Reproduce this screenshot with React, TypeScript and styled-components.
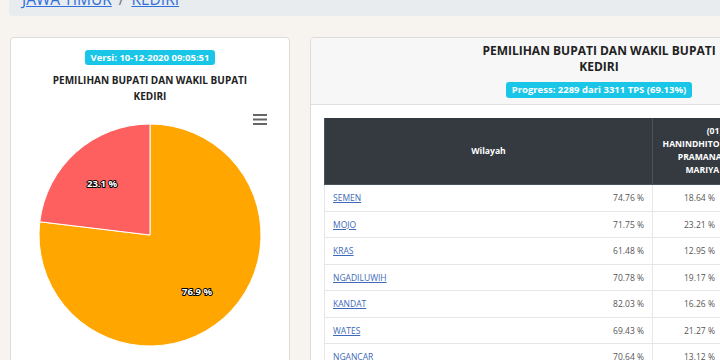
import styled, { createGlobalStyle } from 'styled-components';

const GlobalStyle = createGlobalStyle`
  body {
    margin: 0;
    background: #f7f3ef;
    font-family: 'Open Sans', 'Liberation Sans', sans-serif;
    color: #212529;
    overflow: hidden;
  }
`;

const Page = styled.div`
  width: 1200px;
  padding-left: 9px;
`;

const Breadcrumb = styled.nav`
  margin-top: -21px;
  padding: 8px 13px 5px;
  background: #e9ecef;
  border-radius: 4px;
  font-size: 15.5px;
  line-height: 24px;
  color: #6c757d;
  display: flex;
  gap: 7px;
`;

const Crumb = styled.a`
  color: #2f6fdb;
  text-decoration: underline;
`;

const Row = styled.div`
  display: flex;
  gap: 20px;
  margin-top: 21px;
  padding-left: 1px;
  align-items: flex-start;
`;

const Card = styled.div<{ $width: number }>`
  box-sizing: border-box;
  width: ${(p) => p.$width}px;
  flex-shrink: 0;
  background: #fff;
  border: 1px solid #dedcda;
  border-radius: 4px;
  height: 420px;
  overflow: hidden;
`;

const ChartHead = styled.div`
  padding-top: 12px;
  display: flex;
  flex-direction: column;
  align-items: center;
  text-align: center;
`;

const Badge = styled.span<{ $size: number; $height: number }>`
  display: inline-block;
  background: #1ac6e8;
  color: #fff;
  font-weight: 700;
  font-size: ${(p) => p.$size}px;
  line-height: ${(p) => p.$height}px;
  padding: 0 6px;
  border-radius: 3px;
`;

const ChartTitle = styled.div`
  margin-top: 7px;
  font-weight: 700;
  font-size: 10px;
  line-height: 16px;
  color: #222;
`;

const Chart = styled.svg`
  display: block;
`;

const CardHeader = styled.div`
  background: #f7f7f7;
  border-bottom: 1px solid #dfdfdf;
  padding: 5px 12px 6px;
  display: flex;
  flex-direction: column;
  align-items: center;
  text-align: center;
`;

const Title = styled.div`
  font-weight: 700;
  font-size: 12px;
  line-height: 16px;
  color: #222;
  margin-bottom: 7px;
`;

const CardBody = styled.div`
  padding: 13px;
`;

const Table = styled.table`
  border-collapse: collapse;
  table-layout: fixed;
  width: 552px;
`;

const Th = styled.th<{ $width: number }>`
  box-sizing: border-box;
  width: ${(p) => p.$width}px;
  background: #343a40;
  color: #fff;
  font-weight: 700;
  font-size: 8.6px;
  line-height: 13px;
  padding: 7px 8px;
  border: 1px solid #4b535b;
  border-top: none;
  vertical-align: middle;
`;

const Td = styled.td<{ $align?: string; $indent?: number }>`
  padding: 6px 8px 6px ${(p) => p.$indent ?? 8}px;
  font-size: 8.5px;
  line-height: 13.5px;
  border: 1px solid #e6e6e6;
  color: #555;
  text-align: ${(p) => p.$align ?? 'right'};
  white-space: nowrap;
`;

const AreaLink = styled.a`
  color: #3e69b8;
  text-decoration: underline;
`;

const Value = styled.span`
  float: right;
`;

const rows = [
  ['SEMEN', '74.76 %', '18.64 %'],
  ['MOJO', '71.75 %', '23.21 %'],
  ['KRAS', '61.48 %', '12.95 %'],
  ['NGADILUWIH', '70.78 %', '19.17 %'],
  ['KANDAT', '82.03 %', '16.26 %'],
  ['WATES', '69.43 %', '21.27 %'],
  ['NGANCAR', '70.64 %', '13.12 %'],
];

// pie: 23.1% red slice from 12 o'clock going counter-clockwise
const cx = 139;
const cy = 131;
const r = 111;
const theta = 0.231 * 2 * Math.PI;
const px = cx - r * Math.sin(theta);
const py = cy - r * Math.cos(theta);

function PieChart() {
  return (
    <Chart width={278} height={300}>
      <path
        d={`M${cx},${cy} L${px},${py} A${r},${r} 0 1 0 ${cx},${cy - r} Z`}
        fill="#ffa600"
        stroke="#fff"
        strokeWidth={1}
      />
      <path
        d={`M${cx},${cy} L${cx},${cy - r} A${r},${r} 0 0 0 ${px},${py} Z`}
        fill="#fe6060"
        stroke="#fff"
        strokeWidth={1}
      />
      <g stroke="#666" strokeWidth={2}>
        <line x1={242} y1={11} x2={256} y2={11} />
        <line x1={242} y1={15.5} x2={256} y2={15.5} />
        <line x1={242} y1={20} x2={256} y2={20} />
      </g>
      <g
        fontFamily="'Open Sans', sans-serif"
        fontSize={9.5}
        fontWeight={700}
        fill="#fff"
        stroke="#000"
        strokeWidth={2}
        strokeLinejoin="round"
        paintOrder="stroke"
        textAnchor="middle"
      >
        <text x={91} y={83}>23.1 %</text>
        <text x={186} y={191}>76.9 %</text>
      </g>
    </Chart>
  );
}

export default function App() {
  return (
    <Page>
      <GlobalStyle />
      <Breadcrumb>
        <Crumb>JAWA TIMUR</Crumb>
        <span>/</span>
        <Crumb>KEDIRI</Crumb>
      </Breadcrumb>
      <Row>
        <Card $width={280}>
          <ChartHead>
            <Badge $size={9.5} $height={15}>Versi: 10-12-2020 09:05:51</Badge>
            <ChartTitle>
              PEMILIHAN BUPATI DAN WAKIL BUPATI
              <br />
              KEDIRI
            </ChartTitle>
          </ChartHead>
          <PieChart />
        </Card>
        <Card $width={578}>
          <CardHeader>
            <Title>
              PEMILIHAN BUPATI DAN WAKIL BUPATI
              <br />
              KEDIRI
            </Title>
            <Badge $size={9.5} $height={16}>Progress: 2289 dari 3311 TPS (69.13%)</Badge>
          </CardHeader>
          <CardBody>
            <Table>
              <thead>
                <tr>
                  <Th $width={328}>Wilayah</Th>
                  <Th $width={124}>
                    (01)
                    <br />
                    HANINDHITO HIMAWAN PRAMANA - DEWI MARIYA ULFA
                  </Th>
                  <Th $width={100}>KOTAK KOSONG</Th>
                </tr>
              </thead>
              <tbody>
                {rows.map(([name, a, b]) => (
                  <tr key={name}>
                    <Td $align="left">
                      <AreaLink>{name}</AreaLink>
                      <Value>{a}</Value>
                    </Td>
                    <Td $align="left" $indent={31}>{b}</Td>
                    <Td>{(100 - parseFloat(b)).toFixed(2)} %</Td>
                  </tr>
                ))}
              </tbody>
            </Table>
          </CardBody>
        </Card>
      </Row>
    </Page>
  );
}
